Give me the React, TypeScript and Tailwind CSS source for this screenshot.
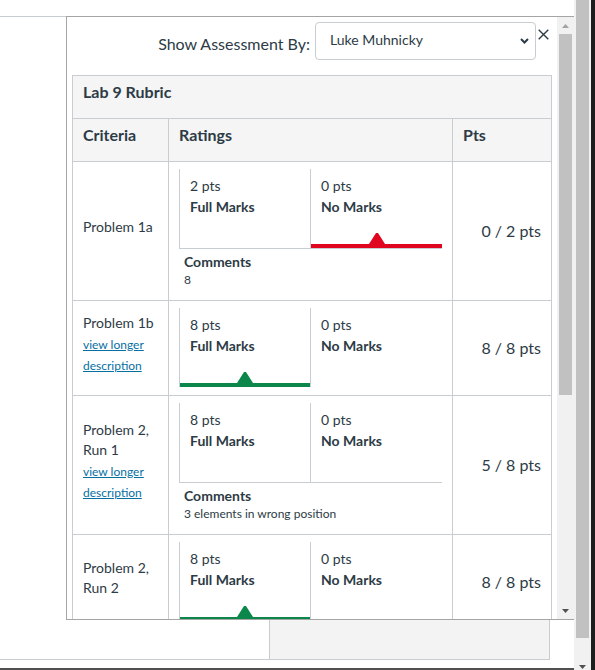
import React from 'react'

type Row = {
  title: string[]
  longer?: boolean
  pick: number | null
  tone?: 'red' | 'green'
  tiers: [string, string][]
  comment?: string
  score: string
}

const rows: Row[] = [
  { title: ['Problem 1a'], pick: 1, tone: 'red', tiers: [['2 pts', 'Full Marks'], ['0 pts', 'No Marks']], comment: '8', score: '0 / 2 pts' },
  { title: ['Problem 1b'], longer: true, pick: 0, tone: 'green', tiers: [['8 pts', 'Full Marks'], ['0 pts', 'No Marks']], score: '8 / 8 pts' },
  { title: ['Problem 2,', 'Run 1'], longer: true, pick: null, tiers: [['8 pts', 'Full Marks'], ['0 pts', 'No Marks']], comment: '3 elements in wrong position', score: '5 / 8 pts' },
  { title: ['Problem 2,', 'Run 2'], pick: 0, tone: 'green', tiers: [['8 pts', 'Full Marks'], ['0 pts', 'No Marks']], score: '8 / 8 pts' },
]

function Tier({ pts, label, active, tone, first }: { pts: string; label: string; active: boolean; tone?: 'red' | 'green'; first: boolean }) {
  const fill = tone === 'red' ? '#e0061f' : '#0b874b'
  return (
    <div className={`flex flex-col h-[79px] border-l border-[#c7cdd1] ${first ? 'w-[131px]' : 'w-[132px]'}`}>
      <div className="pl-[10px] pt-[6px] text-[14px] leading-[21px]">
        <div>{pts}</div>
        <div className="font-bold">{label}</div>
      </div>
      <div className="flex-1" />
      {active && (
        <>
          <svg width="16" height="11" viewBox="0 0 16 11" className="self-center block">
            <polygon points="7,0 9,0 16,11 0,11" fill={fill} />
          </svg>
          <div className={`h-[4px] ${tone === 'red' ? 'bg-[#e0061f]' : 'bg-[#0b874b]'}`} />
        </>
      )}
    </div>
  )
}

function CriterionRow({ row }: { row: Row }) {
  return (
    <div className={`flex border-b border-[#c7cdd1] ${row.comment ? 'h-[139px]' : 'h-[95px]'}`}>
      <div className="w-[96px] shrink-0 border-r border-[#c7cdd1] flex items-center pl-[10px] pb-[8px]">
        <div>
          {row.title.map(t => (
            <div key={t} className="text-[14px] leading-[20px]">{t}</div>
          ))}
          {row.longer && (
            <div className="mt-[1px] text-[12px] leading-[21px] text-[#0770a3] underline">
              <div>view longer</div>
              <div>description</div>
            </div>
          )}
        </div>
      </div>
      <div className="w-[284px] shrink-0 border-r border-[#c7cdd1] pl-[10px] pt-[7px]">
        <div className={`flex w-[263px] ${row.comment ? 'border-b border-[#c7cdd1]' : ''}`}>
          {row.tiers.map(([pts, label], i) => (
            <Tier key={i} pts={pts} label={label} active={row.pick === i} tone={row.tone} first={i === 0} />
          ))}
        </div>
        {row.comment && (
          <div className="pl-[5px] pt-[3px]">
            <div className="text-[14px] leading-[20px] font-bold">Comments</div>
            <div className="text-[12px] leading-[15px]">{row.comment}</div>
          </div>
        )}
      </div>
      <div className="flex-1 flex items-center justify-end pr-[10px] text-[16px]">{row.score}</div>
    </div>
  )
}

function Arrow({ up, color }: { up?: boolean; color: string }) {
  return (
    <svg width="7" height="4" viewBox="0 0 7 4" className="block">
      <polygon points={up ? '3.5,0 7,4 0,4' : '0,0 7,0 3.5,4'} fill={color} />
    </svg>
  )
}

function Panel() {
  return (
    <div className="flex w-[508px] h-[604px] border-l border-t border-b border-[#a5a5a5]">
      <div className="w-[490px] overflow-hidden px-[5px]">
        <div className="flex justify-end items-start pt-[5px] pr-[3px]">
          <span className="mt-[10px] mr-[5px] text-[16px] leading-[24px]">Show Assessment By:</span>
          <div className="flex items-center justify-between w-[221px] h-[38px] border border-[#c7cdd1] rounded-[4px] pl-[14px] pr-[6px] pb-[3px]">
            <span className="text-[14px]">Luke Muhnicky</span>
            <svg width="9" height="6" viewBox="0 0 9 6" className="block mt-[3px]">
              <path d="M1 1l3.5 3.5L8 1" fill="none" stroke="#2d3b45" strokeWidth="2" />
            </svg>
          </div>
          <svg width="11" height="11" viewBox="0 0 11 11" className="block ml-[2px] mt-[7px]">
            <path d="M0.7 0.7L10.3 10.3M10.3 0.7L0.7 10.3" stroke="#2d3b45" strokeWidth="1.4" />
          </svg>
        </div>

        <div className="mt-[15px] w-[480px] border border-[#c7cdd1]">
          <div className="h-[43px] bg-[#f5f5f5] border-b border-[#c7cdd1] pl-[10px] pt-[4px] text-[16px] leading-[24px] font-bold">
            Lab 9 Rubric
          </div>
          <div className="flex h-[43px] bg-[#f5f5f5] border-b border-[#c7cdd1] text-[16px] leading-[24px] font-bold">
            <div className="w-[96px] border-r border-[#c7cdd1] pl-[10px] pt-[4px]">Criteria</div>
            <div className="w-[284px] border-r border-[#c7cdd1] pl-[10px] pt-[4px]">Ratings</div>
            <div className="flex-1 pl-[10px] pt-[4px]">Pts</div>
          </div>
          {rows.map((r, i) => (
            <CriterionRow key={i} row={r} />
          ))}
        </div>
      </div>

      <div className="flex flex-col items-center w-[17px] bg-[#f1f1f1]">
        <div className="h-[17px] flex items-center justify-center">
          <Arrow up color="#a3a3a3" />
        </div>
        <div className="w-[13px] h-[361px] bg-[#c1c1c1]" />
        <div className="flex-1" />
        <div className="h-[17px] flex items-center justify-center">
          <Arrow color="#505050" />
        </div>
      </div>
    </div>
  )
}

export default function App() {
  return (
    <div className="flex w-[595px] h-[670px] bg-white overflow-hidden text-[#2d3b45] font-[family-name:Lato,sans-serif]">
      <div className="flex flex-col w-[574px]">
        <div className="h-[16px] shrink-0" />
        <div className="flex shrink-0">
          <div className="w-[66px] border-t border-[#c7cdd1]" />
          <Panel />
        </div>
        <div className="flex h-[40px] shrink-0">
          <div className="w-[269px] border-b border-[#c7cdd1]" />
          <div className="w-[281px] bg-[#f3f3f3] border-l border-r border-b border-[#c7cdd1]" />
        </div>
        <div className="flex-1" />
        <div className="h-[2px] bg-[#505050]" />
      </div>

      <div className="flex flex-col items-center w-[17px] bg-[#f1f1f1]">
        <div className="w-[13px] h-[638px] bg-[#c1c1c1]" />
        <div className="flex-1 flex items-end pb-[1px]">
          <Arrow color="#505050" />
        </div>
      </div>
      <div className="w-[4px] bg-[#1e1e1e]" />
    </div>
  )
}
